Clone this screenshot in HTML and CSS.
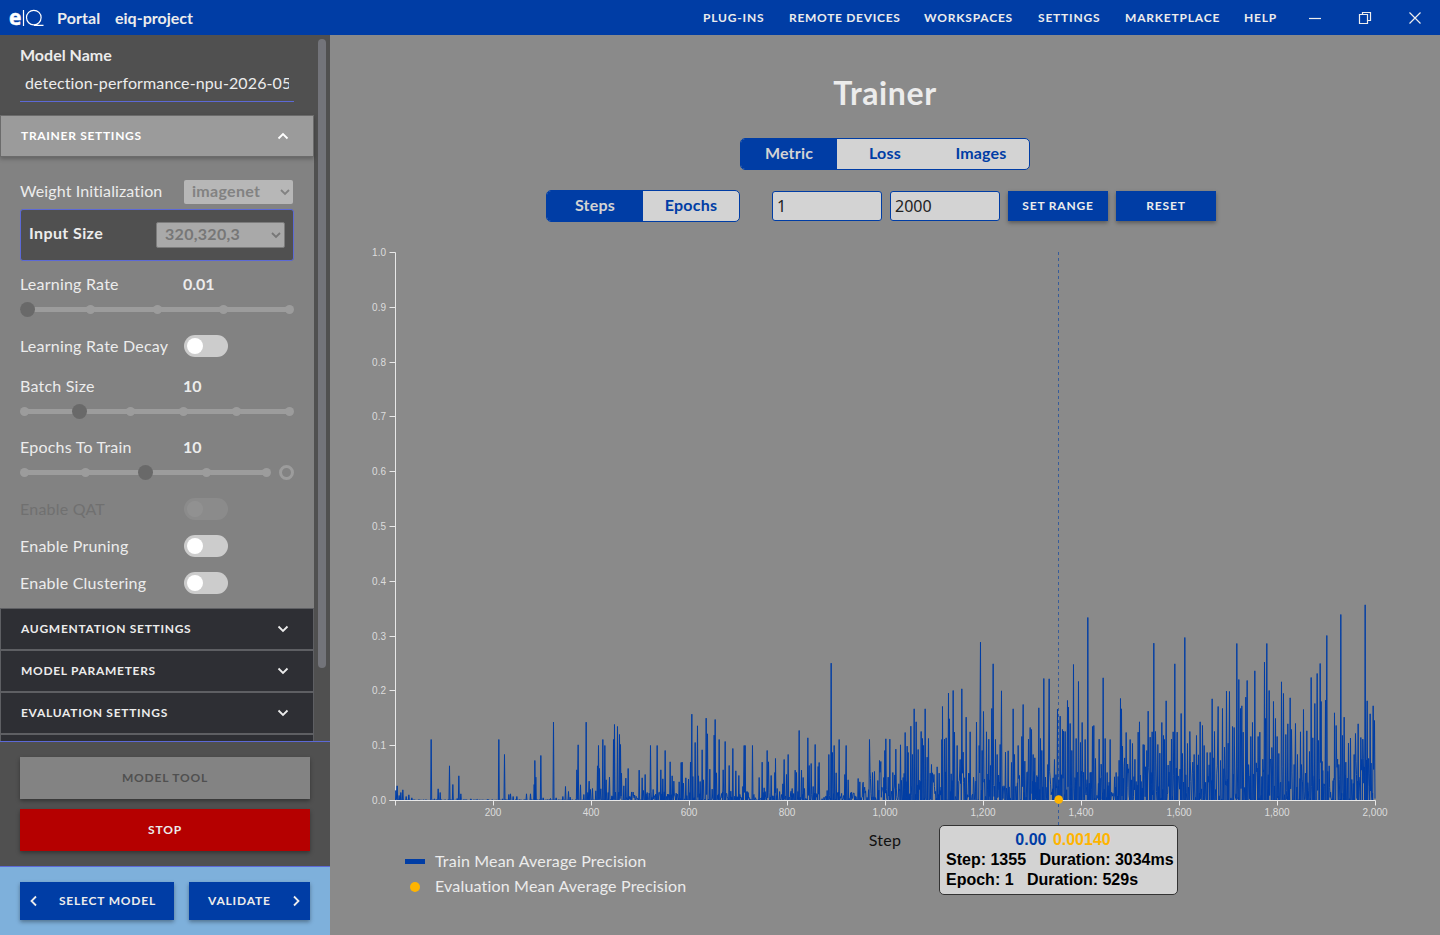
FILE: index.html
```html
<!DOCTYPE html>
<html lang="en">
<head>
    <meta charset="UTF-8">
    <meta name="viewport" content="width=device-width, initial-scale=1.0">
    <title>eIQ Portal</title>
    <link rel="stylesheet" href="styles.css">
</head>
<body>
    <header class="topbar">
        <div class="brand">
            <span class="logo"><b>e</b><svg width="23" height="17" viewBox="0 0 23 17"><path d="M1.5 1V17M19.1 8.6a7.3 7.3 0 1 1-14.6 0a7.3 7.3 0 1 1 14.6 0M12 16.3H21.5" /></svg></span>
            <span class="app-name">Portal</span>
            <span class="project">eiq-project</span>
        </div>
        <nav class="menu">
            <a class="m-plug">PLUG-INS</a>
            <a class="m-remote">REMOTE DEVICES</a>
            <a class="m-work">WORKSPACES</a>
            <a class="m-set">SETTINGS</a>
            <a class="m-market">MARKETPLACE</a>
            <a class="m-help">HELP</a>
            <div class="window-buttons">
                <svg width="14" height="14" viewBox="0 0 14 14"><path d="M1 7.5H13" /></svg>
                <svg width="14" height="14" viewBox="0 0 14 14"><path d="M1.5 3.5H9.5V12.5H1.5ZM4.5 3.5V1.5H12.5V9.5H9.5" /></svg>
                <svg width="14" height="14" viewBox="0 0 14 14"><path d="M1.5 1.5L12.5 12.5M12.5 1.5L1.5 12.5" /></svg>
            </div>
        </nav>
    </header>

    <div class="layout">
        <aside class="sidebar">
            <div class="scroll">
                <div class="settings">
                    <div class="model-name">
                        <label>Model Name</label>
                        <div class="name-input"><span>detection-performance-npu-2026-05</span></div>
                    </div>

                    <div class="accordion open">
                        <span>TRAINER SETTINGS</span>
                        <svg class="chevron" viewBox="0 0 12 12"><path d="M1.5 8.5L6 4L10.5 8.5" /></svg>
                    </div>
                    <div class="panel">
                        <div class="row weight">
                            <label>Weight Initialization</label>
                            <div class="select"><span>imagenet</span><svg class="chevron" viewBox="0 0 12 12"><path d="M2 4L6 8L10 4" /></svg></div>
                        </div>
                        <div class="input-size">
                            <label>Input Size</label>
                            <div class="select wide"><span>320,320,3</span><svg class="chevron" viewBox="0 0 12 12"><path d="M2 4L6 8L10 4" /></svg></div>
                        </div>
                        <div class="row rate"><label>Learning Rate</label><b>0.01</b></div>
                        <div class="slider-row">
                            <div class="slider"><i></i><i></i><i></i><i></i><i></i><div class="thumb-track"><span class="thumb" style="margin-left: 0%"></span></div></div>
                        </div>
                        <div class="row decay"><label>Learning Rate Decay</label><span class="toggle"></span></div>
                        <div class="row batch"><label>Batch Size</label><b>10</b></div>
                        <div class="slider-row">
                            <div class="slider"><i></i><i></i><i></i><i></i><i></i><i></i><div class="thumb-track"><span class="thumb" style="margin-left: 20%"></span></div></div>
                        </div>
                        <div class="row epochs"><label>Epochs To Train</label><b>10</b></div>
                        <div class="slider-row">
                            <div class="slider"><i></i><i></i><i></i><i></i><i></i><div class="thumb-track"><span class="thumb" style="margin-left: 50%"></span></div></div>
                            <span class="ring"></span>
                        </div>
                        <div class="row qat"><label>Enable QAT</label><span class="toggle"></span></div>
                        <div class="row pruning"><label>Enable Pruning</label><span class="toggle"></span></div>
                        <div class="row clustering"><label>Enable Clustering</label><span class="toggle"></span></div>
                    </div>

                    <div class="accordion">
                        <span>AUGMENTATION SETTINGS</span>
                        <svg class="chevron" viewBox="0 0 12 12"><path d="M1.5 3.5L6 8L10.5 3.5" /></svg>
                    </div>
                    <div class="accordion">
                        <span>MODEL PARAMETERS</span>
                        <svg class="chevron" viewBox="0 0 12 12"><path d="M1.5 3.5L6 8L10.5 3.5" /></svg>
                    </div>
                    <div class="accordion">
                        <span>EVALUATION SETTINGS</span>
                        <svg class="chevron" viewBox="0 0 12 12"><path d="M1.5 3.5L6 8L10.5 3.5" /></svg>
                    </div>
                    <div class="accordion"></div>
                </div>
                <div class="scrollbar"></div>
            </div>
            <div class="actions">
                <button class="btn tool"><span>MODEL TOOL</span></button>
                <button class="btn stop"><span>STOP</span></button>
            </div>
            <div class="steps">
                <button class="btn prev"><svg class="chevron" viewBox="0 0 12 12"><path d="M8 1.5L3.5 6L8 10.5" /></svg><span>SELECT MODEL</span></button>
                <button class="btn next"><span>VALIDATE</span><svg class="chevron" viewBox="0 0 12 12"><path d="M4 1.5L8.5 6L4 10.5" /></svg></button>
            </div>
        </aside>

        <main class="trainer">
            <h1>Trainer</h1>
            <div class="tabs">
                <span class="active">Metric</span><span>Loss</span><span>Images</span>
            </div>
            <div class="range">
                <div class="tabs">
                    <span class="active">Steps</span><span>Epochs</span>
                </div>
                <input class="from" type="text" value="1">
                <input type="text" value="2000">
                <button class="btn"><span>SET RANGE</span></button>
                <button class="btn"><span>RESET</span></button>
            </div>
            <div class="chart-box">
                <svg class="chart" width="1110" height="611" viewBox="0 0 1110 611">
                    <g id="axes" class="axes" transform="translate(65.5 14.5)"></g>
                    <path id="series" class="series" transform="translate(65.5 562.5) scale(0.33333)" />
                    <path class="axes" d="M59.5 562.5H1045.5" />
                    <path class="cursor" d="M728.5 14V588" />
                    <circle class="eval-dot" cx="728.7" cy="561.5" r="4.3" />
                    <text class="axis-title" x="555" y="608" text-anchor="middle">Step</text>
                </svg>
                <div class="tooltip">
                    <div class="values"><span class="train">0.00</span> <span class="eval">0.00140</span></div>
                    <div>Step: 1355 &nbsp; Duration: 3034ms</div>
                    <div>Epoch: 1 &nbsp; Duration: 529s</div>
                </div>
            </div>
            <div class="legend">
                <div><i class="bar"></i><span>Train Mean Average Precision</span></div>
                <div><i class="dot"></i><span>Evaluation Mean Average Precision</span></div>
            </div>
        </main>
    </div>

    <script src="chart.js"></script>
</body>
</html>
```
FILE: styles.css
```css
body {
    margin: 0;
    height: 935px;
    overflow: hidden;
    font-family: Lato, "Open Sans", sans-serif;
    font-size: 16px;
    color: #ececec;
    background-color: #8a8a8a;
}
.topbar {
    display: flex;
    justify-content: space-between;
    align-items: center;
    height: 35px;
    background-color: #003da5;
}
.brand {
    display: flex;
    align-items: center;
    padding-left: 9px;
    font-weight: bold;
}
.logo {
    display: flex;
    align-items: center;
    width: 48px;
    height: 26px;
    color: #fff;
}
.logo b {
    width: 13px;
    padding-bottom: 2px;
    font: bold 21px/22px "Open Sans", sans-serif;
    -webkit-text-stroke: 0.5px #fff;
}
.logo svg {
    fill: none;
    stroke: #fff;
    stroke-width: 1.2;
}
.app-name {
    width: 58px;
    letter-spacing: 0.1px;
}
.menu {
    display: flex;
    align-items: center;
    font-size: 12px;
    font-weight: bold;
    letter-spacing: 0.8px;
    white-space: nowrap;
}
.m-plug { width: 86px; }
.m-remote { width: 135px; letter-spacing: 0.7px; }
.m-work { width: 114px; }
.m-set { width: 87px; }
.m-market { width: 119px; }
.m-help { width: 64px; }
.window-buttons {
    display: flex;
    gap: 36px;
    padding-right: 18px;
}
.window-buttons svg {
    fill: none;
    stroke: #eee;
    stroke-width: 1.2;
}
.layout {
    display: flex;
    height: 900px;
}
.sidebar {
    display: flex;
    flex-direction: column;
    width: 330px;
    background-color: #505050;
}
.scroll {
    display: flex;
    height: 706px;
    overflow: hidden;
}
.settings {
    width: 314px;
}
.scrollbar {
    width: 8px;
    height: 629px;
    margin: 4px;
    border-radius: 4px;
    background-color: #73747a;
}
.model-name {
    height: 80px;
    padding: 0 20px;
}
.model-name label {
    display: block;
    height: 38px;
    line-height: 39px;
    font-weight: bold;
}
.name-input {
    height: 28px;
    padding: 0 5px;
    line-height: 20px;
    border-bottom: 1px solid #5c69d6;
}
.name-input span {
    display: block;
    letter-spacing: 0.12px;
    white-space: nowrap;
    overflow: hidden;
}
.accordion {
    display: flex;
    justify-content: space-between;
    align-items: center;
    box-sizing: border-box;
    height: 42px;
    padding: 0 24px 0 20px;
    border: 1px solid #5e5f63;
    background-color: #2e2f34;
    font-size: 12px;
    font-weight: bold;
    letter-spacing: 0.7px;
}
.accordion span {
    padding-bottom: 2px;
}
.accordion.open {
    position: relative;
    color: #fff;
    border-color: #6b6b6b;
    background-color: #9b9b9b;
    box-shadow: 0 2px 4px rgba(0, 0, 0, 0.25);
}
.chevron {
    width: 12px;
    height: 12px;
    fill: none;
    stroke: currentColor;
    stroke-width: 1.8;
}
.panel {
    box-sizing: border-box;
    height: 451px;
    padding: 22px 20px 0;
    background-color: #828282;
}
.row {
    display: flex;
    align-items: center;
    height: 24px;
}
.row label {
    width: 164px;
    padding-bottom: 1px;
    letter-spacing: 0.22px;
    white-space: nowrap;
}
.row b {
    margin-left: -1px;
    padding-bottom: 3px;
}
.row.weight { height: 26px; }
.row.weight label {
    padding-bottom: 3px;
    letter-spacing: 0.12px;
}
.row.rate { margin-top: 12px; }
.row.decay { margin-top: 12px; }
.row.batch { margin-top: 17px; }
.row.epochs { margin-top: 12px; }
.row.rate label,
.row.batch label,
.row.epochs label {
    padding-bottom: 3px;
}
.row.qat { margin-top: 12px; }
.row.pruning { margin-top: 13px; }
.row.clustering { margin-top: 13px; }
.row.qat label { color: #707070; }
.row.qat .toggle { opacity: 0.12; }
.select {
    display: flex;
    justify-content: space-between;
    align-items: center;
    box-sizing: border-box;
    width: 109px;
    height: 24px;
    padding: 0 2px 0 8px;
    border-radius: 2px;
    background-color: #b7b7b7;
    color: #828282;
    font-weight: bold;
    letter-spacing: 0.3px;
}
.select span {
    padding-bottom: 3px;
}
.select.wide {
    width: 129px;
    height: 26px;
    border: 1px solid #7c7c7c;
    background-color: #a9a9a9;
    color: #777;
}
.input-size {
    display: flex;
    justify-content: space-between;
    align-items: center;
    box-sizing: border-box;
    height: 52px;
    margin-top: 4px;
    padding: 0 8px;
    border: 1px solid #5c69d6;
    border-radius: 3px;
    background-color: #505050;
    font-weight: bold;
}
.input-size label {
    padding-bottom: 5px;
    letter-spacing: 0.4px;
}
.slider-row {
    display: flex;
    align-items: center;
    justify-content: space-between;
    gap: 8px;
    height: 25px;
}
.slider {
    position: relative;
    display: flex;
    justify-content: space-between;
    flex: 1;
    height: 9px;
    background: linear-gradient(#9c9c9c, #9c9c9c) center / calc(100% - 6px) 5px no-repeat;
}
.slider i {
    width: 9px;
    height: 9px;
    border-radius: 50%;
    background-color: #9c9c9c;
}
.thumb-track {
    position: absolute;
    inset: -3px 15px 0 0;
}
.thumb {
    display: block;
    width: 15px;
    height: 15px;
    border-radius: 50%;
    background-color: #696969;
}
.ring {
    box-sizing: border-box;
    width: 15px;
    height: 15px;
    border: 3px solid #9c9c9c;
    border-radius: 50%;
}
.toggle {
    box-sizing: border-box;
    width: 44px;
    height: 22px;
    padding: 3px;
    border-radius: 11px;
    background-color: #ccc;
}
.toggle::before {
    content: "";
    display: block;
    width: 16px;
    height: 16px;
    border-radius: 50%;
    background-color: #fff;
}
.btn {
    width: 100px;
    height: 30px;
    padding: 0;
    border: none;
    background-color: #003da5;
    color: #ececec;
    font: bold 12px Lato, sans-serif;
    letter-spacing: 0.8px;
    box-shadow: 0 2px 4px rgba(0, 0, 0, 0.35);
}
.btn span {
    display: block;
    padding-bottom: 2px;
}
.actions {
    display: flex;
    flex-direction: column;
    gap: 10px;
    box-sizing: border-box;
    height: 125px;
    padding: 15px 20px;
    border-top: 1px solid #5c69d6;
}
.actions .btn {
    width: 290px;
    height: 42px;
}
.btn.tool {
    background-color: #838383;
    color: #505050;
}
.btn.stop {
    background-color: #b50000;
}
.steps {
    display: flex;
    justify-content: space-between;
    flex: 1;
    padding: 15px 20px;
    border-top: 1px solid #5c69d6;
    background-color: #7eb0db;
}
.steps .btn {
    display: flex;
    align-items: center;
    justify-content: space-between;
    height: 38px;
}
.btn.prev {
    width: 154px;
    padding: 0 18px 0 8px;
}
.btn.next {
    width: 121px;
    padding: 0 8px 0 19px;
}
.trainer {
    width: 1110px;
}
h1 {
    margin: 37px 0 0;
    height: 66px;
    line-height: 42px;
    font-size: 32px;
    letter-spacing: 0.6px;
    text-align: center;
}
.tabs {
    display: flex;
    box-sizing: border-box;
    width: max-content;
    height: 32px;
    margin: 0 auto;
    border: 1px solid #003da5;
    border-radius: 5px;
    overflow: hidden;
    background-color: #d3d3d3;
    color: #003da5;
    font-weight: bold;
    letter-spacing: 0.2px;
}
.tabs span {
    width: 96px;
    padding-bottom: 2px;
    line-height: 28px;
    text-align: center;
}
.tabs .active {
    background-color: #003da5;
    color: #d3d3d3;
}
.range {
    display: flex;
    align-items: center;
    gap: 8px;
    height: 32px;
    margin: 20px 0 0 216px;
}
.range .tabs {
    margin: 0;
}
.range input {
    box-sizing: border-box;
    width: 110px;
    height: 30px;
    padding: 0 4px;
    border: 1px solid #003da5;
    border-radius: 3px;
    background-color: #d3d3d3;
    color: #222;
    font: 16px "Noto Sans", sans-serif;
}
.range .from {
    margin-left: 24px;
}
.chart-box {
    position: relative;
    height: 611px;
    margin-top: 16px;
}
.chart {
    display: block;
}
.axes {
    fill: none;
    stroke: #e8e8e8;
}
.axes text {
    fill: #dcdcdc;
    stroke: none;
    font: 10px "Liberation Sans", sans-serif;
}
.series {
    fill: none;
    stroke: #003da5;
    stroke-width: 3;
    stroke-linejoin: bevel;
}
.cursor {
    stroke: #003da5;
    stroke-opacity: 0.6;
    stroke-dasharray: 3 3;
}
.eval-dot {
    fill: #ffb400;
}
.axis-title {
    fill: #111;
    letter-spacing: 0.3px;
}
.tooltip {
    position: absolute;
    left: 609px;
    top: 587px;
    box-sizing: border-box;
    width: 239px;
    height: 70px;
    padding: 4px 6px;
    border: 1px solid #333;
    border-radius: 5px;
    background-color: #d3d3d3;
    color: #000;
    font: bold 16px/20px "Liberation Sans", sans-serif;
    white-space: nowrap;
}
.values {
    padding-left: 9px;
    text-align: center;
}
.values .train { color: #003da5; }
.values .eval { color: #ffb400; margin-left: 2px; }
.legend {
    padding: 0 0 0 75px;
    letter-spacing: 0.18px;
}
.legend div {
    display: flex;
    align-items: center;
    height: 25px;
}
.legend span {
    padding-bottom: 2px;
}
.legend i {
    margin-right: 10px;
}
.legend .bar {
    width: 20px;
    height: 5px;
    background-color: #003da5;
}
.legend .dot {
    width: 10px;
    height: 10px;
    margin: 0 15px 0 5px;
    border-radius: 50%;
    background-color: #ffb400;
}
```
FILE: chart.js
```js
const axes = document.getElementById('axes');
const series = document.getElementById('series');

// Peaks of the train curve, x:height, each chunk with its own x offset and noise level
const chunks = [
    { offset: -136, noise: 3, peaks: '137:30 141:44 147:15 152:24 158:32 168:12 176:17 185:8 243:183 253:5 264:35 270:24 298:104 308:48 321:6 326:74 332:20 362:5 446:183 457:5 463:138 476:18 481:20 489:12 500:12 529:20 541:20 552:48 554:120 557:70 572:135 579:8 601:6 610:235 618:8 638:12 646:42 655:27 660:10 680:92 684:167 691:47 701:18 708:235 713:24 717:58 721:33 727:36 737:29 742:104 745:165 748:96 752:35 758:183 764:165 768:62 774:24 778:70 785:14' },
    { offset: 644, noise: 28, peaks: '10:183 13:228 22:222 28:198 31:168 34:82 41:44 47:67 54:96 66:12 87:91 96:68 100:30 105:78 111:24 121:165 129:33 141:165 146:24 152:92 158:65 165:150 180:116 186:74 191:58 198:22 207:56 213:114 216:115 220:52 227:68 235:64 241:115 245:259 248:72 255:174 262:224 265:74 270:57 276:152 280:62 288:247 292:200 299:94 306:34 312:196 315:243 319:83 327:183 339:92 345:177 357:105 362:28 368:156 377:89 386:75 398:42 402:165 405:165 411:27 427:165 447:69 456:115 462:38 471:150 475:116 483:75 494:84 496:126 501:36 518:50 522:123 529:78 534:138 546:36 555:91 559:84 567:210 574:91 579:69 583:36 593:188 597:105 603:111 609:42 615:168 624:102 627:114 651:30 656:138 663:412 667:144 672:165 678:83 687:183 704:78 708:165 714:62 744:66 749:56' },
    { offset: 1394, noise: 90, peaks: '12:30 28:183 37:84 43:87 53:60 58:120 62:117 71:69 74:150 77:185 84:70 89:184 98:84 107:154 121:167 129:69 135:204 141:163 144:144 152:223 157:138 162:275 168:236 174:153 183:207 187:186 190:165 195:275 201:130 205:186 210:82 214:108 231:101 237:82 245:183 247:282 253:184 258:188 265:322 268:245 273:80 279:330 283:205 291:165 296:58 300:123 305:335 309:145 318:250 330:206 340:70 349:235 357:165 361:475 366:150 370:267 379:206 386:184 391:105 395:276 399:410 406:183 411:138 420:168 424:329 436:145 444:149 454:114 459:275 463:138 474:165 478:75 485:192 489:288 494:118 500:84 505:184 510:219 514:213 519:138 524:128 530:75 536:278 541:186 545:150 551:366 556:70 563:108 567:365 579:68 583:123 592:274 600:253 607:213 610:208 615:207 622:300 625:280 630:231 635:150 640:408 648:186 655:357 661:174 666:234 675:183 683:549 690:84 697:222 701:225 706:126 717:184 723:109 729:368 735:186 741:84 750:183 768:84 774:72' },
    { offset: 2174, noise: 130, peaks: '1:306 4:275 7:163 12:102 18:204 30:183 37:171 48:57 54:205 58:236 63:57 69:168 72:167 80:150 84:268 90:190 96:206 101:472 106:207 113:168 119:142 125:234 130:195 133:183 138:299 154:184 159:206 164:410 171:205 183:261 187:141 194:489 202:171 209:207 212:57 222:138 229:195 235:137 240:236 247:225 252:165 261:144 270:144 276:305 283:207 290:82 294:282 301:120 307:276 313:160 319:328 324:172 328:327 337:222 342:219 350:471 356:363 361:276 365:284 369:205 377:310 381:360 392:192 397:234 404:389 414:192 419:205 425:72 433:415 436:246 440:471 447:330 455:159 460:297 466:246 471:192 476:141 484:356 490:321 497:198 503:230 510:308 514:213 522:108 526:231 532:138 541:206 550:273 560:209 568:147 573:369 578:188 584:291 591:381 595:180 600:411 603:297 608:90 616:301 620:495 627:104 641:66 643:263 648:225 656:108 662:558 667:195 672:250 677:115 685:172 691:187 695:63 702:138 706:201 714:230 722:189 728:184 735:587 741:299 750:260 759:284 763:240' }
];

let seed = 7;
function random() {
    seed = (seed * 16807) % 2147483647;
    return seed / 2147483647;
}

function drawAxes() {
    let html = '<path d="M0 0V553" />';
    for (let i = 0; i <= 10; i++) {
        const y = Math.round(548 - i * 54.8);
        html += `<path d="M-6 ${y}H0" /><text x="-9.5" y="${y + 3.5}" text-anchor="end">${(i / 10).toFixed(1)}</text>`;
    }
    for (let step = 200; step <= 2000; step += 200) {
        const x = Math.round(step * 0.49);
        html += `<path d="M${x} 548V553" /><text x="${x - 0.5}" y="563.5" text-anchor="middle">${step.toLocaleString('en-US')}</text>`;
    }
    axes.innerHTML = html;
}

function drawSeries() {
    const step = 1.47;
    let d = 'M0 0';
    let last = 0;
    chunks.forEach(chunk => {
        chunk.peaks.split(' ').forEach(peak => {
            const [px, height] = peak.split(':').map(Number);
            const x = px + chunk.offset;
            for (let fx = last + step; fx < x - step; fx += step) {
                const h = Math.pow(random(), 2.5) * chunk.noise;
                d += `L${fx.toFixed(1)} ${-h.toFixed(1)}`;
            }
            if (x - last > step * 1.9) {
                d += `L${(x - step).toFixed(1)} 0`;
            }
            d += `L${x} ${-height}`;
            last = x;
            if (height > 20) {
                last = x + step;
                d += `L${last.toFixed(1)} ${-(random() < 0.3 ? random() * chunk.noise : 0).toFixed(1)}`;
            }
        });
    });
    series.setAttribute('d', d);
}

drawAxes();
drawSeries();
```
